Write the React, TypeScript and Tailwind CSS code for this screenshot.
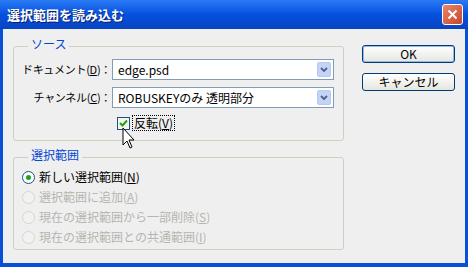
import React from "react";

const font = { fontFamily: '"Noto Sans CJK JP", "Noto Sans", sans-serif' };

function Combo({ value }: { value: string }) {
  return (
    <div className="flex h-[21px] w-[222px] items-center border border-[#7f9db9] bg-white pl-[5px] pr-[2px]">
      <span className="flex-1 whitespace-nowrap text-[12px] leading-none text-black">{value}</span>
      <div className="flex h-[15px] w-[14px] items-center justify-center rounded-[2px] border border-[#b8c9f0] bg-[#c5d3f7]">
        <svg width="8" height="6" viewBox="0 0 8 6">
          <path d="M1 1 L4 4 L7 1" stroke="#4d6185" strokeWidth="1.8" fill="none" />
        </svg>
      </div>
    </div>
  );
}

function Radio({ checked, disabled, label }: { checked?: boolean; disabled?: boolean; label: React.ReactNode }) {
  return (
    <div className="flex h-[20px] items-center gap-[4px]">
      <div
        className={`flex h-[13px] w-[13px] items-center justify-center rounded-full border ${
          disabled ? "border-[#d6d6d0] bg-[#f2f2f0]" : "border-[#1c5180] bg-white"
        }`}
      >
        {checked && <div className="h-[5px] w-[5px] rounded-full bg-[#21a121]" />}
      </div>
      <span className={`whitespace-nowrap text-[12px] leading-none ${disabled ? "text-[#b6b6b0]" : "text-black"}`}>{label}</span>
    </div>
  );
}

export default function App() {
  return (
    <div className="h-[267px] w-[468px] overflow-hidden bg-[#0a4fd8]" style={font}>
      {/* title bar */}
      <div className="flex h-[29px] items-center justify-between bg-gradient-to-b from-[#2a7af5] via-[#0550de] to-[#0844c2] pl-[7px] pr-[5px]">
        <span className="text-[13px] font-bold leading-none text-white [text-shadow:1px_1px_0_#0a1f6b]">
          選択範囲を読み込む
        </span>
        <div className="flex h-[21px] w-[21px] items-center justify-center rounded-[3px] border border-white bg-gradient-to-br from-[#e8876a] to-[#c8432a]">
          <svg width="11" height="11" viewBox="0 0 11 11">
            <path d="M1.5 1.5 L9.5 9.5 M9.5 1.5 L1.5 9.5" stroke="white" strokeWidth="2" />
          </svg>
        </div>
      </div>
      {/* client */}
      <div className="relative mx-[3px] h-[234px] bg-[#efefef]">
        <div className="flex pt-[10px]">
          {/* left column */}
          <div className="ml-[10px] flex w-[331px] flex-col">
            {/* source group */}
            <div className="relative mt-[7px] h-[95px] rounded-[3px] border border-[#d0d0bf]">
              <span className="absolute left-[14px] top-[-9px] bg-[#efefef] px-[3px] text-[12px] leading-none text-[#0046d5]">
                ソース
              </span>
              <div className="flex flex-col gap-[7px] pt-[12px]">
                <div className="flex items-center">
                  <span className="w-[98px] whitespace-nowrap pr-[1px] text-right text-[11px] leading-none tracking-[-0.3px] text-black">
                    ドキュメント(<span className="underline">D</span>)：
                  </span>
                  <Combo value="edge.psd" />
                </div>
                <div className="flex items-center">
                  <span className="w-[98px] whitespace-nowrap pr-[1px] text-right text-[11px] leading-none tracking-[-0.3px] text-black">
                    チャンネル(<span className="underline">C</span>)：
                  </span>
                  <Combo value="ROBUSKEYのみ 透明部分" />
                </div>
                <div className="ml-[103px] flex items-center gap-[2px]">
                  <div className="flex h-[13px] w-[13px] items-center justify-center border border-[#1c5180] bg-[#f4f4ec]">
                    <svg width="9" height="9" viewBox="0 0 9 9">
                      <path d="M1 4 L3.5 6.5 L8 1.5" stroke="#21a121" strokeWidth="2" fill="none" />
                    </svg>
                  </div>
                  <span className="border border-dotted border-black px-[1px] py-[1px] text-[12px] leading-none text-black">
                    反転(<span className="underline">V</span>)
                  </span>
                </div>
              </div>
            </div>
            {/* selection group */}
            <div className="relative mt-[16px] h-[93px] rounded-[3px] border border-[#d0d0bf]">
              <span className="absolute left-[14px] top-[-9px] bg-[#efefef] px-[3px] text-[12px] leading-none text-[#0046d5]">
                選択範囲
              </span>
              <div className="flex flex-col pl-[8px] pt-[9px]">
                <Radio checked label={<>新しい選択範囲(<span className="underline">N</span>)</>} />
                <Radio disabled label={<>選択範囲に追加(<span className="underline">A</span>)</>} />
                <Radio disabled label={<>現在の選択範囲から一部削除(<span className="underline">S</span>)</>} />
                <Radio disabled label={<>現在の選択範囲との共通範囲(<span className="underline">I</span>)</>} />
              </div>
            </div>
          </div>
          {/* buttons */}
          <div className="ml-[18px] flex flex-col gap-[10px] pt-[6px]">
            <div className="flex h-[18px] w-[93px] items-center justify-center rounded-[3px] border border-[#003c74] bg-gradient-to-b from-white to-[#e6e6e0] text-[12px] font-normal leading-none text-black shadow-[inset_0_0_0_1px_#98b8ea]">
              OK
            </div>
            <div className="flex h-[18px] w-[93px] items-center justify-center rounded-[3px] border border-[#003c74] bg-gradient-to-b from-white to-[#e6e6e0] text-[12px] leading-none text-black">
              キャンセル
            </div>
          </div>
        </div>
        {/* mouse cursor */}
        <svg className="absolute left-[119px] top-[98px]" width="14" height="24" viewBox="0 0 14 24">
          <path d="M1 1 L1 18 L5 14 L8 21 L10 20 L7 13 L12 13 Z" fill="white" stroke="black" strokeWidth="1" />
        </svg>
      </div>
    </div>
  );
}
